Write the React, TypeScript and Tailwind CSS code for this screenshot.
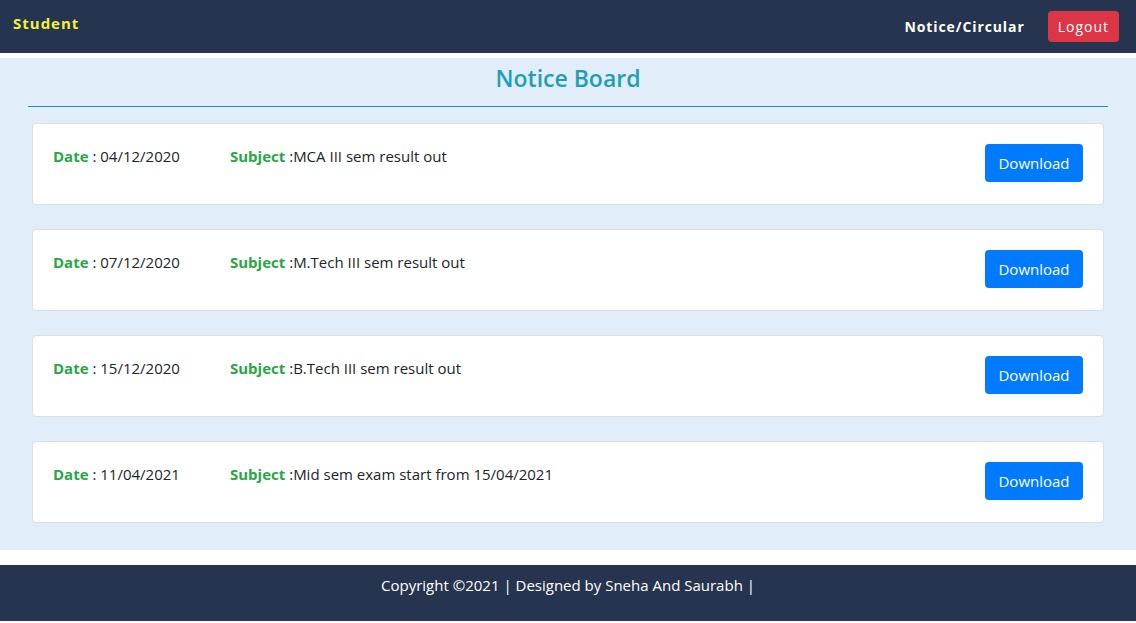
const notices = [
  { date: '04/12/2020', subject: 'MCA III sem result out' },
  { date: '07/12/2020', subject: 'M.Tech III sem result out' },
  { date: '15/12/2020', subject: 'B.Tech III sem result out' },
  { date: '11/04/2021', subject: 'Mid sem exam start from 15/04/2021' },
];

export default function App() {
  return (
    <div className="min-h-[623px] bg-white font-['Open_Sans',sans-serif] text-[#212529]">
      <nav className="flex h-[53px] items-center justify-between bg-[#263450] pl-[13px] pr-[17px]">
        <span className="-mt-[6px] text-[15px] font-bold tracking-[1px] text-[#f2f23a]">Student</span>
        <div className="flex items-center gap-[23px]">
          <a className="text-[14px] font-bold tracking-[0.9px] text-white">Notice/Circular</a>
          <button className="h-[31px] rounded-[4px] bg-[#dc3545] px-[10px] text-[14px] tracking-[1px] text-white">
            Logout
          </button>
        </div>
      </nav>

      <main className="mt-[5px] bg-[#e1edf9] px-[28px] pb-[27px]">
        <h2 className="pt-[2px] text-center text-[23px] font-semibold leading-[36px] text-[#1f9fb5]">
          Notice Board
        </h2>
        <div className="mt-[10px] h-px bg-[#2a8fa9]" />
        <div className="mt-[16px] flex flex-col gap-[24px] px-[4px]">
          {notices.map((n, i) => (
            <div
              key={i}
              className="flex h-[82px] items-center justify-between rounded-[4px] border border-[#dcdfe3] bg-white pl-[20px] pr-[20px]"
            >
              <div className="-mt-[16px] flex text-[15px]">
                <div className="w-[177px]">
                  <span className="font-bold text-[#28a745]">Date</span> : {n.date}
                </div>
                <div>
                  <span className="font-bold text-[#28a745]">Subject</span> :{n.subject}
                </div>
              </div>
              <button className="-mt-[2px] h-[38px] w-[98px] rounded-[4px] bg-[#007bff] text-[15px] text-white">
                Download
              </button>
            </div>
          ))}
        </div>
      </main>

      <footer className="mt-[15px] flex h-[56px] justify-center bg-[#263450] pt-[9px]">
        <p className="text-[15px] text-white">Copyright ©2021 | Designed by Sneha And Saurabh |</p>
      </footer>
    </div>
  );
}
